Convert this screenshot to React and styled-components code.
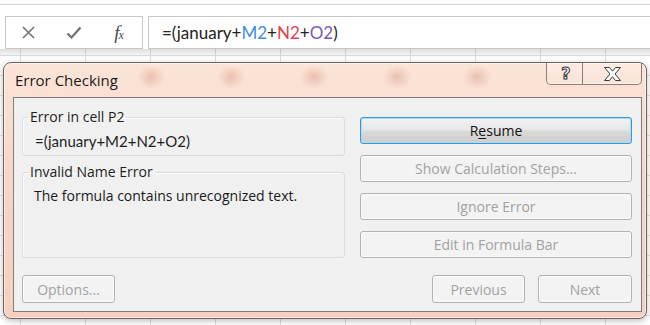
import React from 'react'
import styled, { createGlobalStyle } from 'styled-components'

const GlobalStyle = createGlobalStyle`
  *, *::before, *::after { box-sizing: border-box; }
  html, body {
    margin: 0;
    padding: 0;
    background: #fff;
  }
  body {
    width: 650px;
    height: 325px;
    overflow: hidden;
    font-family: 'Open Sans', 'Noto Sans', sans-serif;
  }
`

const Screen = styled.div`
  position: relative;
  width: 650px;
  height: 325px;
  overflow: hidden;
  background: #fff;
  display: flex;
  flex-direction: column;
`

const RibbonEdge = styled.div`
  height: 5px;
  border-bottom: 1px solid #d4d4d4;
  margin-bottom: 11px;
`

const FormulaBar = styled.div`
  display: flex;
  gap: 5px;
  padding-left: 5px;
  height: 33px;
`

const NameTools = styled.div`
  width: 138px;
  border: 1px solid #c8c8c8;
  display: flex;
  align-items: center;
`

const ToolSlot = styled.span`
  width: 45px;
  display: flex;
  justify-content: center;
  align-items: center;
  color: #707070;
`

const FxLabel = styled.span`
  font-family: 'Liberation Serif', serif;
  font-style: italic;
  font-size: 19px;
  line-height: 1;
  color: #4a4a4a;
  letter-spacing: -1px;
  & small {
    font-size: 12px;
  }
`

const FormulaInput = styled.div`
  flex: 1;
  border: 1px solid #c8c8c8;
  border-right: none;
  display: flex;
  align-items: center;
  padding-left: 13px;
  font-family: Lato, 'Liberation Sans', sans-serif;
  font-size: 17px;
  color: #222;
`

const Ref = styled.span`
  color: ${({ c }) => c};
`

const Sheet = styled.div`
  flex: 1;
  background-color: #fff;
  background-image:
    linear-gradient(to bottom, rgba(0, 0, 0, 0.13), rgba(0, 0, 0, 0) 9px),
    linear-gradient(to right, #dedede 1px, transparent 1px),
    linear-gradient(to bottom, #e2e2e2 1px, transparent 1px);
  background-size: 100% 100%, 65px 100%, 100% 20px;
  background-position: 0 0, 20px 0, 0 6px;
`

const Dialog = styled.div`
  position: absolute;
  left: 3px;
  top: 62px;
  width: 644px;
  height: 257px;
  border: 1px solid #6f625d;
  border-radius: 8px;
  display: flex;
  flex-direction: column;
  box-shadow: inset 0 0 0 1px rgba(255, 255, 255, 0.55), 0 2px 6px rgba(0, 0, 0, 0.25);
  background:
    radial-gradient(ellipse 14px 12px at 147px 14px, rgba(214, 150, 128, 0.45), transparent),
    radial-gradient(ellipse 14px 12px at 227px 14px, rgba(214, 150, 128, 0.45), transparent),
    radial-gradient(ellipse 14px 12px at 310px 14px, rgba(214, 150, 128, 0.45), transparent),
    radial-gradient(ellipse 14px 12px at 393px 14px, rgba(214, 150, 128, 0.45), transparent),
    radial-gradient(ellipse 14px 12px at 473px 14px, rgba(214, 150, 128, 0.45), transparent),
    linear-gradient(to bottom, #fbe4d8, #f7d6c7 40%, #f5cfc0);
`

const TitleBar = styled.div`
  height: 34px;
  display: flex;
  align-items: center;
  padding-left: 11px;
`

const Title = styled.span`
  font-size: 15px;
  color: #1b1b1b;
`

const CaptionButtons = styled.div`
  align-self: flex-start;
  margin-left: auto;
  margin-right: 4px;
  display: flex;
  height: 22px;
  border: 1px solid #8d7d77;
  border-top: none;
  border-radius: 0 0 5px 5px;
  background: linear-gradient(to bottom, rgba(255, 255, 255, 0.25), rgba(255, 255, 255, 0.05));
  box-shadow: inset 0 -1px 0 rgba(255, 255, 255, 0.6);
`

const CaptionButton = styled.div`
  width: ${({ w }) => w}px;
  display: flex;
  align-items: center;
  justify-content: center;
  & + & {
    border-left: 1px solid #8d7d77;
  }
`

const HelpGlyph = styled.span`
  font-family: 'DejaVu Sans', sans-serif;
  font-weight: bold;
  font-size: 16px;
  line-height: 1;
  margin-left: 3px;
  color: #fff;
  -webkit-text-stroke: 1px #333;
`

const Client = styled.div`
  flex: 1;
  margin: 0 4px 6px 9px;
  border: 1px solid #7e7e7e;
  background: #f0f0f0;
  display: flex;
  flex-direction: column;
  padding: 11px 9px 8px 8px;
`

const Body = styled.div`
  display: grid;
  grid-template-columns: 323px 272px;
  column-gap: 15px;
`

const LeftColumn = styled.div`
  display: flex;
  flex-direction: column;
  gap: 8px;
`

const GroupBox = styled.fieldset`
  margin: 0;
  height: ${({ h }) => h}px;
  border: 1px solid #d3dde3;
  border-radius: 3px;
  padding: 0 8px 0 7px;
  box-shadow: inset 1px 1px 0 #fbfbfb;
`

const Legend = styled.legend`
  margin-left: -2px;
  padding: 0 2px;
  font-size: 14px;
  line-height: 16px;
  color: #1e1e1e;
`

const FormulaEcho = styled.div`
  padding: 7px 0 0 5px;
  font-family: Lato, 'Liberation Sans', sans-serif;
  font-size: 15px;
  line-height: 18px;
  color: #1e1e1e;
`

const Message = styled.div`
  padding: 7px 0 0 4px;
  font-size: 14px;
  line-height: 18px;
  color: #1a1a1a;
`

const ActionColumn = styled.div`
  display: flex;
  flex-direction: column;
  gap: 11px;
  padding-top: 8px;
`

const Button = styled.div`
  height: ${({ h }) => h || 27}px;
  width: ${({ w }) => (w ? w + 'px' : 'auto')};
  display: flex;
  align-items: center;
  justify-content: center;
  border-radius: 3px;
  font-size: 14px;
  color: ${({ primary }) => (primary ? '#141414' : '#a2a2a2')};
  border: 1px solid ${({ primary }) => (primary ? '#3a95d0' : '#b2b2b2')};
  background: ${({ primary }) =>
    primary
      ? 'linear-gradient(to bottom, #f3f3f3, #e6e6e6 48%, #dadada 52%, #cdcdcd)'
      : '#f3f3f3'};
  box-shadow: inset 0 0 0 1px ${({ primary }) => (primary ? '#a9dcf5' : '#fbfbfb')};
  & u {
    text-underline-offset: 2px;
  }
`

const Footer = styled.div`
  margin-top: auto;
  display: flex;
  gap: 13px;
`

const Spacer = styled.div`
  flex: 1;
`

const CloseIcon = () => (
  <svg width="19" height="14" viewBox="0 0 19 14">
    <path
      d="M1.5 0.5 H6.5 L9.5 4.2 L12.5 0.5 H17.5 L12 7 L17.5 13.5 H12.5 L9.5 9.8 L6.5 13.5 H1.5 L7 7 Z"
      fill="#fff"
      stroke="#3a3a3a"
      strokeWidth="1"
      strokeLinejoin="round"
    />
  </svg>
)

const CancelIcon = () => (
  <svg width="15" height="15" viewBox="0 0 15 15">
    <path d="M2 2 L13 13 M13 2 L2 13" stroke="#6e6e6e" strokeWidth="1.5" />
  </svg>
)

const EnterIcon = () => (
  <svg width="16" height="14" viewBox="0 0 16 14">
    <path d="M1.5 7.5 L5.5 11.5 L14.5 1.5" fill="none" stroke="#707070" strokeWidth="2.2" />
  </svg>
)

export default function App() {
  return (
    <>
      <GlobalStyle />
      <Screen>
        <RibbonEdge />
        <FormulaBar>
          <NameTools>
            <ToolSlot><CancelIcon /></ToolSlot>
            <ToolSlot><EnterIcon /></ToolSlot>
            <ToolSlot>
              <FxLabel>f<small>x</small></FxLabel>
            </ToolSlot>
          </NameTools>
          <FormulaInput>
            =(january+<Ref c="#3b8ee0">M2</Ref>+<Ref c="#e5404a">N2</Ref>+<Ref c="#7a58c2">O2</Ref>)
          </FormulaInput>
        </FormulaBar>
        <Sheet />

        <Dialog>
          <TitleBar>
            <Title>Error Checking</Title>
            <CaptionButtons>
              <CaptionButton w={35}>
                <HelpGlyph>?</HelpGlyph>
              </CaptionButton>
              <CaptionButton w={59}>
                <CloseIcon />
              </CaptionButton>
            </CaptionButtons>
          </TitleBar>
          <Client>
            <Body>
              <LeftColumn>
                <GroupBox h={47}>
                  <Legend>Error in cell P2</Legend>
                  <FormulaEcho>=(january+M2+N2+O2)</FormulaEcho>
                </GroupBox>
                <GroupBox h={94}>
                  <Legend>Invalid Name Error</Legend>
                  <Message>The formula contains unrecognized text.</Message>
                </GroupBox>
              </LeftColumn>
              <ActionColumn>
                <Button primary>
                  <span>R<u>e</u>sume</span>
                </Button>
                <Button>Show Calculation Steps...</Button>
                <Button>Ignore Error</Button>
                <Button>Edit in Formula Bar</Button>
              </ActionColumn>
            </Body>
            <Footer>
              <Button w={93} h={28}>Options...</Button>
              <Spacer />
              <Button w={93} h={28}>Previous</Button>
              <Button w={94} h={28}>Next</Button>
            </Footer>
          </Client>
        </Dialog>
      </Screen>
    </>
  )
}
